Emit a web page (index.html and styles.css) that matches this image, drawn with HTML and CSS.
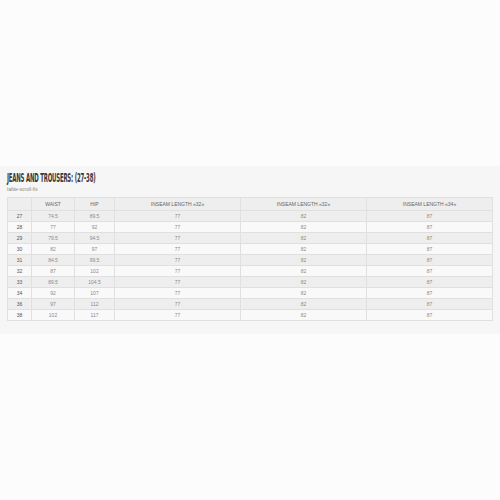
FILE: index.html
```html
<!DOCTYPE html>
<html>
<head>
<meta charset="utf-8">
<link rel="stylesheet" href="styles.css">
</head>
<body>
<section class="band">
  <h1 class="title"><span class="title-text">JEANS AND TROUSERS: (27-38)</span></h1>
  <div class="note">table-scroll-fix</div>
  <table class="sizes">
    <colgroup>
      <col class="c-size"><col class="c-waist"><col class="c-hip"><col class="c-ins"><col class="c-ins"><col class="c-ins">
    </colgroup>
    <thead>
      <tr><th></th><th>WAIST</th><th>HIP</th><th>INSEAM LENGTH «32»</th><th>INSEAM LENGTH «32»</th><th>INSEAM LENGTH «34»</th></tr>
    </thead>
    <tbody>
      <tr><td class="sz">27</td><td>74.5</td><td>89.5</td><td>77</td><td>82</td><td>87</td></tr>
      <tr><td class="sz">28</td><td>77</td><td>92</td><td>77</td><td>82</td><td>87</td></tr>
      <tr><td class="sz">29</td><td>79.5</td><td>94.5</td><td>77</td><td>82</td><td>87</td></tr>
      <tr><td class="sz">30</td><td>82</td><td>97</td><td>77</td><td>82</td><td>87</td></tr>
      <tr><td class="sz">31</td><td>84.5</td><td>99.5</td><td>77</td><td>82</td><td>87</td></tr>
      <tr><td class="sz">32</td><td>87</td><td>102</td><td>77</td><td>82</td><td>87</td></tr>
      <tr><td class="sz">33</td><td>89.5</td><td>104.5</td><td>77</td><td>82</td><td>87</td></tr>
      <tr><td class="sz">34</td><td>92</td><td>107</td><td>77</td><td>82</td><td>87</td></tr>
      <tr><td class="sz">36</td><td>97</td><td>112</td><td>77</td><td>82</td><td>87</td></tr>
      <tr><td class="sz">38</td><td>102</td><td>117</td><td>77</td><td>82</td><td>87</td></tr>
    </tbody>
  </table>
</section>
</body>
</html>
```

FILE: styles.css
```css
html, body {
  margin: 0;
  padding: 0;
  background: #fcfcfc;
}
body {
  font-family: "Liberation Sans", Arial, sans-serif;
  color: #555;
}
.band {
  margin-top: 166px;
  background: #f6f6f6;
  padding: 5px 7px 13px;
}
.title {
  margin: 0;
  font-family: "DejaVu Sans Condensed", "Liberation Sans", sans-serif;
  font-weight: bold;
  font-size: 12px;
  line-height: 14px;
  letter-spacing: -0.4px;
  color: #3a3a3a;
  white-space: nowrap;
}
.title-text {
  display: inline-block;
  transform: scaleX(0.5);
  transform-origin: left center;
}
.note {
  font-size: 5px;
  line-height: 7px;
  margin-top: 1px;
  color: #888;
}
.sizes {
  margin-top: 4px;
  width: 486px;
  border-collapse: collapse;
  table-layout: fixed;
  font-size: 5px;
  border: 1px solid #e0e0e0;
}
.c-size { width: 24px; }
.c-waist { width: 43px; }
.c-hip { width: 40px; }
.c-ins { width: 126px; }
.sizes th, .sizes td {
  border: 1px solid #e0e0e0;
  text-align: center;
  padding: 0;
  font-weight: normal;
}
.sizes th {
  height: 12px;
  color: #666;
  background: #eeeeee;
}
.sizes td {
  height: 10px;
  color: #8a8a8a;
}
.sizes td.sz {
  color: #555;
}
.sizes tbody tr:nth-child(odd) { background: #eeeeee; }
.sizes tbody tr:nth-child(even) { background: #f9f9f9; }
```
